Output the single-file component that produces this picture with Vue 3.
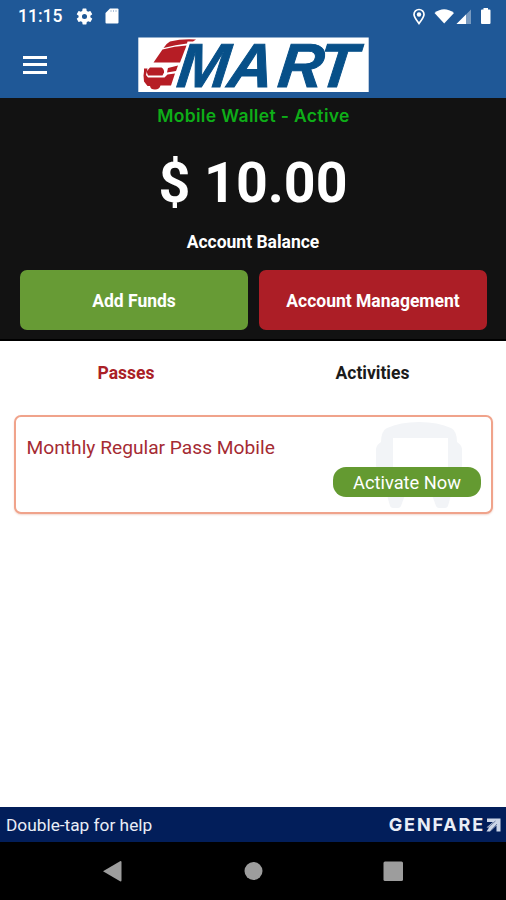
<script setup>
const actions = [
  { label: 'Add Funds', tone: 'green' },
  { label: 'Account Management', tone: 'red' },
]
</script>

<template>
  <div class="screen">
    <header class="top">
      <div class="status">
        <span class="clock">11:15</span>
        <svg class="gear" viewBox="0 0 24 24" width="19" height="19"><path fill="#fff" fill-rule="evenodd" d="M19.4 13a7.500 7.500 0 0 0 0-2l2.100-1.650a.5.5 0 0 0 .12-.64l-2-3.460a.5.5 0 0 0-.6-.22l-2.500 1a7.300 7.300 0 0 0-1.700-.98l-.38-2.650A.5.500 0 0 0 14 2h-4a.5.5 0 0 0-.5.420L9.120 5.070a7.300 7.300 0 0 0-1.700.98l-2.500-1a.5.5 0 0 0-.6.220l-2 3.460a.5.5 0 0 0 .12.640L4.570 11a7.500 7.500 0 0 0 0 2l-2.130 1.630a.5.5 0 0 0-.12.640l2 3.460a.5.5 0 0 0 .6.220l2.500-1a7.300 7.300 0 0 0 1.700.98l.38 2.650a.5.5 0 0 0 .5.420h4a.5.5 0 0 0 .5-.42l.38-2.650a7.300 7.300 0 0 0 1.700-.98l2.500 1a.5.500 0 0 0 .6-.22l2-3.460a.5.5 0 0 0-.12-.64zM12 15.200a3.200 3.200 0 1 1 0-6.400 3.200 3.200 0 0 1 0 6.400z" /></svg>
        <svg class="sd" viewBox="0 0 14 16" width="14" height="16"><path fill="#fff" d="M5 .5h7.500q1 0 1 1v13q0 1-1 1h-11q-1 0-1-1V5z" /><path stroke="#1f5897" stroke-width="1" opacity=".35" d="M6 2v2M8.500 2v2M11 2v2" /></svg>
        <svg class="signals" viewBox="0 0 82 20" width="82" height="20">
          <path fill="none" stroke="#fff" stroke-width="1.700" d="M8 17.500C5 13.500 3 11 3 8.500a5 5 0 0 1 10 0c0 2.500-2 5-5 9z" />
          <circle cx="8" cy="8.500" r="2.200" fill="#fff" />
          <path fill="#fff" d="M23.500 7q9.500-7.500 19.500 0l-9.800 10.500z" />
          <path fill="#fff" opacity=".4" d="M60 3.500v14.500H45.500z" />
          <path fill="#fff" d="M55 8.500v9.500h-9.500z" />
          <path fill="#fff" d="M72.500 3.500V2h4.500v1.500h1.500q1 0 1 1v12.500q0 1-1 1h-7.500q-1 0-1-1V4.500q0-1 1-1z" />
        </svg>
      </div>
      <div class="bar">
        <div class="menu"><i></i><i></i><i></i></div>
        <svg class="logo" viewBox="138 37 231 56" width="231" height="56">
          <path fill="#fff" d="M138.300 37.500h230.400v54.500H138.300z" />
          <g fill="#b61d25">
            <path d="M170 41.500Q182 38.500 196 39.500L193 41.500H187.500L187 43.500Q176 44.500 163.500 48 165.500 44 170 41.500z" />
            <path d="M162.500 49.500Q175 46 186.500 45.500L180 62.500H153.500z" />
            <path d="M150 67.500h11.500q3 2 2.500 5l-1.500 3H148l-1.500-4z" />
            <path d="M168 68l10-2.500-2 5.500-9 1.500z" />
            <path d="M144 71.500v-3h3.500L146 75l2 2.500h16.500l3-3 7.500-1-4 12h-10.500q-1 4-5.500 4t-5-3.500h-2.500l-3.500-4.500-.5-6z" />
          </g>
          <text transform="translate(0 86.500) skewX(-7)" x="175.500 226.500 276.500 316.500" y="0" font-size="62" class="word">MART</text>
        </svg>
      </div>
    </header>

    <section class="wallet">
      <p class="state">Mobile Wallet - Active</p>
      <p class="amount">$ 10.00</p>
      <p class="caption">Account Balance</p>
      <div class="actions">
        <button v-for="a in actions" :key="a.label" :class="a.tone">{{ a.label }}</button>
      </div>
    </section>

    <nav class="tabs">
      <span class="on">Passes</span>
      <span>Activities</span>
    </nav>

    <main class="list">
      <article class="pass">
        <svg class="bus" viewBox="0 0 88 90" width="88" height="90">
          <path fill="#f2f4f7" fill-rule="evenodd" d="M6 21Q6 10 12 7 25 1 44 1t32 6q6 3 6 14 5 3 5 8v15q0 4-5 6v24h-6l-3 11q-1 2-3 2h-6q-2 0-3-2l-4-11H30l-4 11q-1 2-3 2h-5q-2 0-3-2l-3-11H6V50q-5-2-5-6V29q0-5 5-8zM18 17V53h55V17z" />
        </svg>
        <h2>Monthly Regular Pass Mobile</h2>
        <button class="activate">Activate Now</button>
      </article>
    </main>

    <footer class="help">
      <span>Double-tap for help</span>
      <div class="brand">
        <span>GENFARE</span>
        <svg viewBox="0 0 15 14" width="15" height="14"><path fill="#cbd5e7" d="M1 .5h13.500v13h-4V7.500l-6.500 6H.5L3 9.500H.500L7 4H1z" /><path d="M2 9.500L9.500 3M5 12.500L11 6" stroke="#506590" stroke-width=".8" /></svg>
      </div>
    </footer>
    <div class="system">
      <svg viewBox="0 0 506 58" width="506" height="58" fill="#9d9d9d">
        <path d="M103 29.200L120.500 19q1 0 1 1v18.500q0 1-1 1z" />
        <circle cx="253.500" cy="29" r="9" />
        <rect x="383.500" y="19.500" width="19.500" height="19.500" rx="1.500" />
      </svg>
    </div>
  </div>
</template>

<style>
body { margin: 0; }
</style>

<style scoped>
.screen {
  width: 506px;
  height: 900px;
  display: flex;
  flex-direction: column;
  background: #fff;
  font-family: Roboto, "Liberation Sans", sans-serif;
  overflow: hidden;
}
p, h2 { margin: 0; }
button { border: 0; padding: 0; font-family: inherit; color: #fff; }
svg { display: block; flex: none; }
.top { height: 98px; background: #1f5897; flex: none; }
.status { height: 32px; display: flex; align-items: center; padding: 0 14px 0 18px; color: #fff; }
.clock { font-size: 17.500px; font-weight: 500; width: 45px; letter-spacing: 0; white-space: nowrap; }
.gear { margin-left: 11.500px; }
.sd { margin-left: 11px; }
.signals { margin-left: auto; margin-right: -.5px; margin-top: -1px; }
.bar { display: flex; align-items: flex-start; padding: 5px 0 0 23px; }
.menu { width: 24px; display: flex; flex-direction: column; gap: 4.500px; margin: 18.500px 91px 0 0; }
.menu i { height: 3px; background: #fff; }
.logo { overflow: visible; }
.word { font-family: "Liberation Sans", sans-serif; font-weight: 700; font-style: italic; fill: #075089; stroke: #075089; stroke-width: 1px; }
.wallet {
  height: 243px;
  flex: none;
  box-sizing: border-box;
  border-bottom: 2px solid #000;
  background: #121212;
  color: #fff;
  display: flex;
  flex-direction: column;
  align-items: center;
}
.state { margin-top: 6px; height: 24px; line-height: 24px; font-family: Inter, sans-serif; font-size: 17.500px; font-weight: 600; letter-spacing: 0.350px; padding-left: 1px; color: #0eae18; white-space: nowrap; }
.amount { margin-top: 23px; height: 66px; line-height: 66px; font-size: 55.500px; font-weight: 700; white-space: nowrap; }
.caption { margin-top: 14px; height: 22px; line-height: 22px; font-size: 17.500px; font-weight: 700; white-space: nowrap; }
.actions { display: grid; grid-template-columns: 1fr 1fr; gap: 11px; width: 468px; margin-top: 17px; padding-left: 1px; box-sizing: border-box; }
.actions button { height: 60px; border-radius: 7px; font-size: 17.500px; font-weight: 700; padding-top: 1px; white-space: nowrap; }
.green { background: #679b35; }
.red { background: #ac1e26; }
.tabs { display: grid; grid-template-columns: 252px 241px; height: 63px; line-height: 65px; text-align: center; font-size: 17.500px; font-weight: 700; color: #1b1b1b; flex: none; }
.on { color: #aa2026; }
.list { flex: 1; padding: 11px 13px 0 13.500px; }
.pass {
  position: relative;
  box-sizing: border-box;
  height: 99px;
  border: 2px solid #f0a38b;
  border-radius: 7px;
  box-shadow: 0 1px 2px #f2d8d0;
  padding: 18px 10px 0 11px;
  background: #fff;
}
.bus { position: absolute; right: 28px; top: 4px; }
h2 { position: relative; font-size: 19.200px; line-height: 26px; font-weight: 400; color: #a52b33; white-space: nowrap; }
.activate { position: relative; display: block; margin: 6px 0 0 auto; padding-top: 1px; width: 148px; height: 30px; border-radius: 13px; background: #649a31; font-size: 18.300px; }
.help { height: 35px; flex: none; background: #021e5a; color: #e9edf6; display: flex; align-items: center; justify-content: space-between; padding: 1px 5px 0 6px; box-sizing: border-box; font-size: 17.300px; white-space: nowrap; }
.brand { display: flex; align-items: center; gap: 1px; margin-top: -1px; font-family: Inter, sans-serif; font-weight: 700; font-size: 18px; letter-spacing: 1.850px; }
.system { height: 58px; flex: none; background: #000; }
</style>
